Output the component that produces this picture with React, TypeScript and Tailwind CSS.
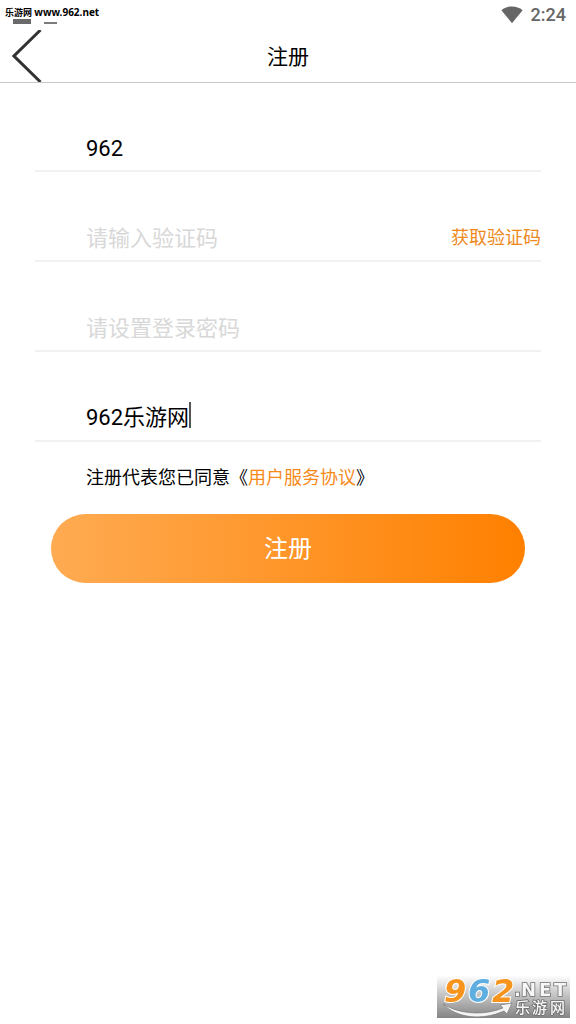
import { useState } from "react";

const sans = "font-[Roboto,'Noto_Sans_CJK_SC',sans-serif]";
const inputBase =
  "h-full min-w-0 bg-transparent text-[22px] leading-[26px] text-black outline-none placeholder:text-[#d8d8d8] placeholder:opacity-100";

function StatusBar() {
  return (
    <div className="flex h-[30px] items-start justify-between pr-[10px] pl-[5px]">
      <div>
        <p className="pt-[6px] font-['Noto_Sans','Noto_Sans_CJK_SC',sans-serif] text-[9px] leading-[13px] font-bold whitespace-nowrap text-black">
          乐游网 <span className="text-[10px]">www.962.net</span>
        </p>
        <div className="flex items-start gap-[13px] pl-2">
          <span className="h-[5px] w-[18px] bg-[#6a6a6a]" />
          <span className="mt-[3px] h-[2px] w-[13px] bg-[#7c7c7c]" />
        </div>
      </div>
      <div className="flex items-center gap-2 pt-[5px] text-[#666666]">
        <svg width="22" height="18" viewBox="0 0 22 18" fill="currentColor" aria-hidden="true">
          <path d="M0.4 4.2C3.4 1.6 7 0.4 11 0.4S18.6 1.6 21.6 4.2L11 17.2Z" />
        </svg>
        <span className="text-[18px] leading-[20px] font-medium">2:24</span>
      </div>
    </div>
  );
}

function SiteBadge() {
  return (
    <svg
      className="fixed right-[6px] bottom-[6px] overflow-visible"
      width="133"
      height="42"
      viewBox="0 0 133 42"
      role="img"
      aria-label="962.NET 乐游网"
    >
      <defs>
        <linearGradient id="badge" x1="0" y1="0" x2="0" y2="1">
          <stop offset="0" stopColor="#fdfdfd" />
          <stop offset="0.45" stopColor="#c4c4c4" />
          <stop offset="1" stopColor="#858585" />
        </linearGradient>
      </defs>
      <rect width="133" height="42" fill="url(#badge)" />
      <path
        d="M6 28C22 38 46 40 66 32L63 29L75 27L70 38L67 35C45 45 19 42 6 28Z"
        fill="#f4f4f4"
        stroke="#777777"
        strokeWidth="0.7"
      />
      <g
        fontFamily="'DejaVu Sans', sans-serif"
        fontWeight="700"
        fontStyle="italic"
        fontSize="32"
        stroke="#ffffff"
        strokeWidth="2"
        paintOrder="stroke"
      >
        <text x="7" y="26" fill="#f7941d">9</text>
        <text x="31" y="26" fill="#5eaee0">6</text>
        <text x="55" y="26" fill="#f7941d">2</text>
      </g>
      <g fill="#f7f7f7" stroke="#707070" strokeWidth="1.6" paintOrder="stroke" fontWeight="700">
        <g fontSize="18" fontFamily="'DejaVu Sans', sans-serif">
          <text x="77" y="20">.</text>
          <text x="84" y="20">N</text>
          <text x="102" y="20">E</text>
          <text x="117" y="20">T</text>
        </g>
        <g fontSize="15" fontFamily="'Noto Sans CJK SC', sans-serif" fontWeight="500">
          <text x="78" y="37">乐</text>
          <text x="95" y="37">游</text>
          <text x="113" y="37">网</text>
        </g>
      </g>
    </svg>
  );
}

export default function App() {
  const [phone, setPhone] = useState("962");
  const [name, setName] = useState("962乐游网");

  return (
    <div className={`min-h-screen bg-white text-black ${sans}`}>
      <header className="border-b border-[#c8c8c8]">
        <StatusBar />
        <div className="grid h-[52px] grid-cols-[1fr_auto_1fr] items-center">
          <button type="button" aria-label="返回" className="ml-3 w-[30px]">
            <svg width="30" height="52" viewBox="0 0 30 52" fill="none" aria-hidden="true">
              <path d="M28.5 0L2 26L28.5 52" stroke="#333333" strokeWidth="3" />
            </svg>
          </button>
          <h1 className="pt-0.5 text-[21px] leading-[30px]">注册</h1>
        </div>
      </header>

      <form onSubmit={(e) => e.preventDefault()}>
        <div className="flex flex-col gap-11 px-[35px] pt-[43px]">
          <div className="flex h-[46px] border-b-2 border-[#f1f1f1] pl-[51px]">
            <input
              aria-label="手机号"
              className={`w-full ${inputBase}`}
              value={phone}
              onChange={(e) => setPhone(e.target.value)}
            />
          </div>
          <div className="flex h-[46px] items-center border-b-2 border-[#f1f1f1] pl-[51px]">
            <input aria-label="验证码" className={`flex-1 ${inputBase}`} placeholder="请输入验证码" />
            <button type="button" className="text-[18px] leading-[26px] text-[#ee8a1c]">
              获取验证码
            </button>
          </div>
          <div className="flex h-[46px] border-b-2 border-[#f1f1f1] pl-[51px]">
            <input
              type="password"
              aria-label="登录密码"
              className={`w-full ${inputBase}`}
              placeholder="请设置登录密码"
            />
          </div>
          <div className="flex h-[46px] items-center border-b-2 border-[#f1f1f1] pl-[51px]">
            <input
              aria-label="昵称"
              className={`field-sizing-content pb-1.5 caret-transparent ${inputBase}`}
              value={name}
              onChange={(e) => setName(e.target.value)}
            />
            <span className="mb-1.5 h-[26px] w-[2px] bg-[#555555]" />
          </div>
        </div>

        <p className="px-[86px] pt-[23px] text-[18px] leading-[26px]">
          注册代表您已同意《
          <a href="#terms" className="text-[#f58a1a]">用户服务协议</a>》
        </p>

        <div className="px-[51px] pt-[23px]">
          <button
            type="submit"
            className="h-[69px] w-full rounded-full bg-linear-to-r/srgb from-[#ffab52] to-[#ff8000] text-[24px] text-white"
          >
            注册
          </button>
        </div>
      </form>

      <SiteBadge />
    </div>
  );
}
